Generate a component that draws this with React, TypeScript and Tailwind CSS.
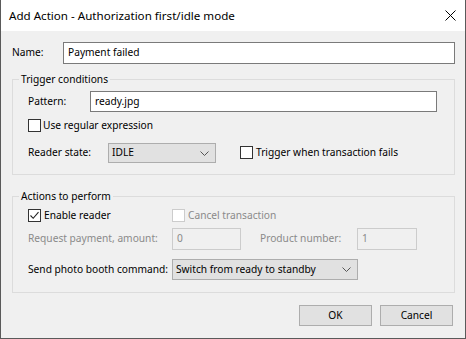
import React from "react"

function Checkbox({ checked = false, disabled = false }: { checked?: boolean; disabled?: boolean }) {
  return (
    <span
      className={
        "flex h-[13px] w-[13px] shrink-0 items-center justify-center border bg-white " +
        (disabled ? "border-[#cccccc]" : "border-[#333333]")
      }
    >
      {checked && (
        <svg width="11" height="11" viewBox="0 0 11 11">
          <path d="M1.5 5.5 L4.2 8.3 L9.5 2.2" fill="none" stroke="#222" strokeWidth="1.1" />
        </svg>
      )}
    </span>
  )
}

function Combo({ value, width, height }: { value: string; width: string; height: string }) {
  return (
    <div
      className={
        "flex items-center justify-between border border-[#adadad] bg-[#e1e1e1] pl-[3px] pr-[6px] " +
        width +
        " " +
        height
      }
    >
      <span>{value}</span>
      <svg width="9" height="5" viewBox="0 0 9 5">
        <path d="M0.5 0.5 L4.5 4.5 L8.5 0.5" fill="none" stroke="#555" strokeWidth="1" />
      </svg>
    </div>
  )
}

export default function App() {
  return (
    <div
      className="flex h-[339px] w-[466px] flex-col border-x border-b border-[#5a5a5a] text-[10.2px] text-black"
      style={{ fontFamily: '"Noto Sans", "Liberation Sans", sans-serif' }}
    >
      {/* title bar */}
      <div className="flex h-[31px] shrink-0 items-center justify-between bg-white pl-[8px] pr-[9px]">
        <span className="text-[11.6px]">Add Action - Authorization first/idle mode</span>
        <svg width="11" height="11" viewBox="0 0 11 11">
          <path d="M0.5 0.5 L10.5 10.5 M10.5 0.5 L0.5 10.5" stroke="#000" strokeWidth="1" />
        </svg>
      </div>

      <div className="flex flex-1 flex-col bg-[#f0f0f0] pl-[11px] pr-[10px] pt-[11px]">
        <div className="flex h-[22px] items-center">
          <span className="w-[51px]">Name:</span>
          <div className="flex h-full flex-1 items-center border border-[#7a7a7a] bg-white px-[4px]">
            Payment failed
          </div>
        </div>

        <fieldset className="mt-[8px] border border-[#dcdcdc] pb-[11px] pl-[15px] pr-[17px]">
          <legend className="-ml-[9px] px-[2px] leading-[15px]">Trigger conditions</legend>
          <div className="mt-[4px] flex h-[21px] items-center">
            <span className="w-[62px]">Pattern:</span>
            <div className="flex h-full flex-1 items-center border border-[#7a7a7a] bg-white px-[4px]">
              ready.jpg
            </div>
          </div>
          <div className="mt-[7px] flex h-[13px] items-center gap-[2px]">
            <Checkbox />
            <span>Use regular expression</span>
          </div>
          <div className="mt-[11px] flex h-[20px] items-center">
            <span className="w-[80px]">Reader state:</span>
            <Combo value="IDLE" width="w-[108px]" height="h-[20px]" />
            <div className="ml-[24px] flex items-center gap-[3px]">
              <Checkbox />
              <span>Trigger when transaction fails</span>
            </div>
          </div>
        </fieldset>

        <fieldset className="mt-[14px] border border-[#dcdcdc] pb-[12px] pl-[15px] pr-[17px]">
          <legend className="-ml-[9px] px-[2px] leading-[15px]">Actions to perform</legend>
          <div className="mt-[5px] flex h-[13px] items-center">
            <div className="flex w-[144px] items-center gap-[3px]">
              <Checkbox checked />
              <span>Enable reader</span>
            </div>
            <div className="flex items-center gap-[3px] text-[#8a8a8a]">
              <Checkbox disabled />
              <span>Cancel transaction</span>
            </div>
          </div>
          <div className="mt-[6px] flex h-[22px] items-center text-[#8a8a8a]">
            <span className="w-[144px]">Request payment, amount:</span>
            <div className="flex h-full w-[69px] items-center border border-[#cccccc] px-[4px]">0</div>
            <span className="ml-[19px] w-[97px]">Product number:</span>
            <div className="flex h-full w-[60px] items-center border border-[#cccccc] px-[4px]">1</div>
          </div>
          <div className="mt-[9px] flex h-[21px] items-center">
            <span className="w-[144px]">Send photo booth command:</span>
            <Combo value="Switch from ready to standby" width="w-[186px]" height="h-[21px]" />
          </div>
        </fieldset>

        <div className="mt-[12px] flex justify-end gap-[8px] pr-[2px]">
          <button className="h-[21px] w-[73px] border border-[#adadad] bg-[#e1e1e1]">OK</button>
          <button className="h-[21px] w-[73px] border border-[#adadad] bg-[#e1e1e1]">Cancel</button>
        </div>
      </div>
    </div>
  )
}
